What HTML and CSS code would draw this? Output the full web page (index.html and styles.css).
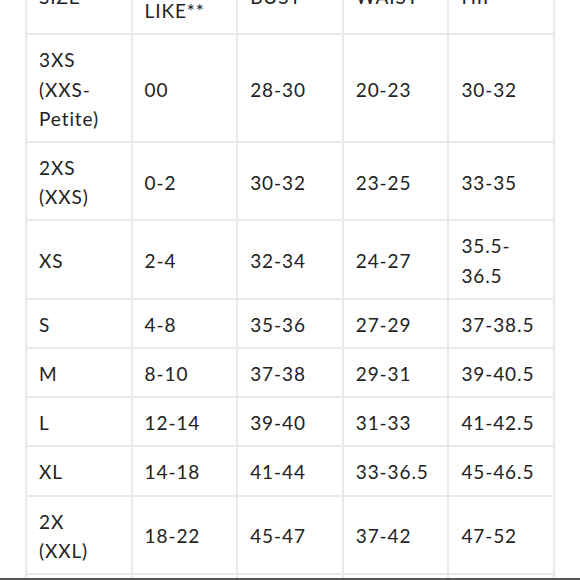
FILE: index.html
```html
<!DOCTYPE html>
<html>
<head>
<meta charset="utf-8">
<link rel="stylesheet" href="styles.css">
</head>
<body>
<div class="page">
<table class="sizes">
  <tr><td>SIZE</td><td>**FITS<br>LIKE**</td><td>BUST</td><td>WAIST</td><td>HIP</td></tr>
  <tr><td>3XS<br>(XXS-<br>Petite)</td><td>00</td><td>28-30</td><td>20-23</td><td>30-32</td></tr>
  <tr><td>2XS<br>(XXS)</td><td>0-2</td><td>30-32</td><td>23-25</td><td>33-35</td></tr>
  <tr><td>XS</td><td>2-4</td><td>32-34</td><td>24-27</td><td>35.5-<br>36.5</td></tr>
  <tr><td>S</td><td>4-8</td><td>35-36</td><td>27-29</td><td>37-38.5</td></tr>
  <tr><td>M</td><td>8-10</td><td>37-38</td><td>29-31</td><td>39-40.5</td></tr>
  <tr><td>L</td><td>12-14</td><td>39-40</td><td>31-33</td><td>41-42.5</td></tr>
  <tr><td>XL</td><td>14-18</td><td>41-44</td><td>33-36.5</td><td>45-46.5</td></tr>
  <tr><td>2X<br>(XXL)</td><td>18-22</td><td>45-47</td><td>37-42</td><td>47-52</td></tr>
  <tr><td>3X</td><td>22-26</td><td>48-50</td><td>43-45</td><td>53-55</td></tr>
</table>
</div>
<div class="bottom-bar"></div>
</body>
</html>
```
FILE: styles.css
```css
html, body {
  margin: 0;
  padding: 0;
  background: #fff;
  overflow: hidden;
}
.page {
  padding-left: 25px;
  margin-top: -45px;
}
.sizes {
  border-collapse: collapse;
  table-layout: fixed;
  width: 530px;
  font-family: "Lato", "Noto Sans", sans-serif;
  font-size: 19px;
  line-height: 29.2px;
  color: #222;
  letter-spacing: 0.9px;
}
.sizes td {
  width: 20%;
  border: 2px solid #e9e9e9;
  padding: 10px 12px 8px;
  vertical-align: middle;
  text-align: left;
}
.bottom-bar {
  position: fixed;
  left: 0;
  right: 0;
  bottom: 0;
  height: 2px;
  background: #555;
}
```
